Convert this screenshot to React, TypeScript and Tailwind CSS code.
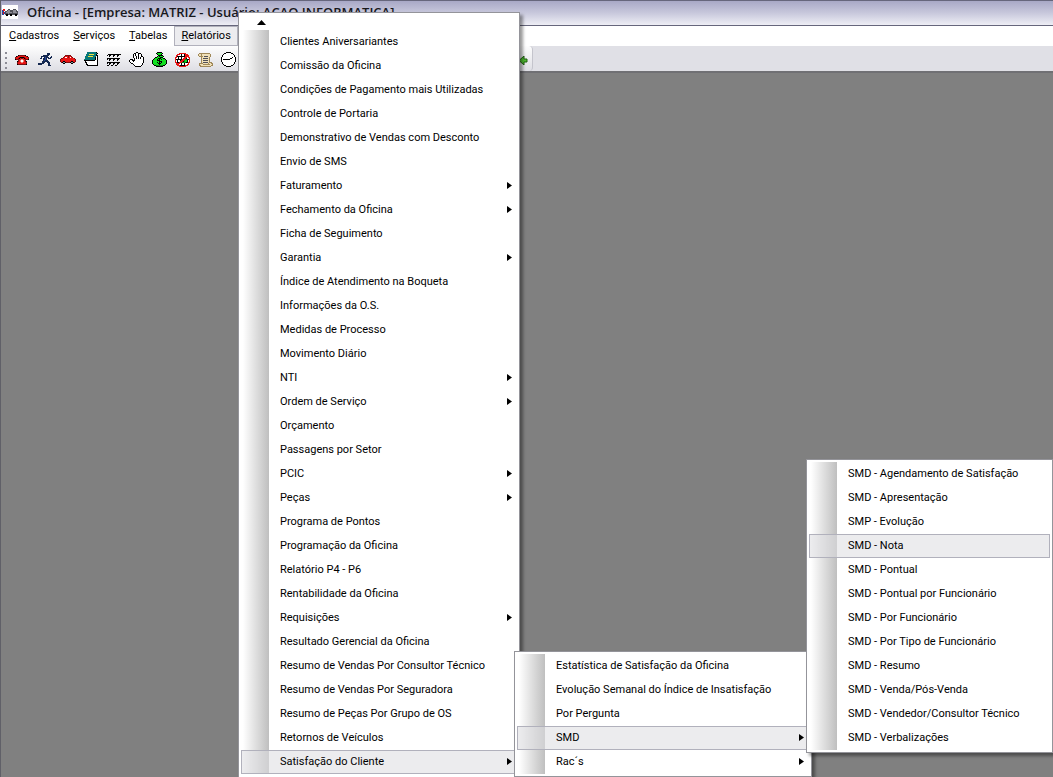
import clsx from 'clsx';

type Item = { label: string; sub?: boolean; active?: boolean };

const REPORTS: Item[] = [
  { label: 'Clientes Aniversariantes' },
  { label: 'Comissão da Oficina' },
  { label: 'Condições de Pagamento mais Utilizadas' },
  { label: 'Controle de Portaria' },
  { label: 'Demonstrativo de Vendas com Desconto' },
  { label: 'Envio de SMS' },
  { label: 'Faturamento', sub: true },
  { label: 'Fechamento da Oficina', sub: true },
  { label: 'Ficha de Seguimento' },
  { label: 'Garantia', sub: true },
  { label: 'Índice de Atendimento na Boqueta' },
  { label: 'Informações da O.S.' },
  { label: 'Medidas de Processo' },
  { label: 'Movimento Diário' },
  { label: 'NTI', sub: true },
  { label: 'Ordem de Serviço', sub: true },
  { label: 'Orçamento' },
  { label: 'Passagens por Setor' },
  { label: 'PCIC', sub: true },
  { label: 'Peças', sub: true },
  { label: 'Programa de Pontos' },
  { label: 'Programação da Oficina' },
  { label: 'Relatório P4 - P6' },
  { label: 'Rentabilidade da Oficina' },
  { label: 'Requisições', sub: true },
  { label: 'Resultado Gerencial da Oficina' },
  { label: 'Resumo de Vendas Por Consultor Técnico' },
  { label: 'Resumo de Vendas Por Seguradora' },
  { label: 'Resumo de Peças Por Grupo de OS' },
  { label: 'Retornos de Veículos' },
  { label: 'Satisfação do Cliente', sub: true, active: true },
];

const SATISFACTION: Item[] = [
  { label: 'Estatística de Satisfação da Oficina' },
  { label: 'Evolução Semanal do Índice de Insatisfação' },
  { label: 'Por Pergunta' },
  { label: 'SMD', sub: true, active: true },
  { label: 'Rac´s', sub: true },
];

const SMD: Item[] = [
  { label: 'SMD - Agendamento de Satisfação' },
  { label: 'SMD - Apresentação' },
  { label: 'SMP - Evolução' },
  { label: 'SMD - Nota', active: true },
  { label: 'SMD - Pontual' },
  { label: 'SMD - Pontual por Funcionário' },
  { label: 'SMD - Por Funcionário' },
  { label: 'SMD - Por Tipo de Funcionário' },
  { label: 'SMD - Resumo' },
  { label: 'SMD - Venda/Pós-Venda' },
  { label: 'SMD - Vendedor/Consultor Técnico' },
  { label: 'SMD - Verbalizações' },
];

const PALETTE: Record<string, string> = {
  k: '#000000',
  w: '#ffffff',
  r: '#e81414',
  d: '#7c1010',
  p: '#f08878',
  n: '#142850',
  b: '#2848a0',
  t: '#087878',
  y: '#f0e040',
  g: '#10e020',
  G: '#0a8a18',
  s: '#f0e0b8',
  o: '#a08858',
  a: '#909098',
  m: '#505058',
};

// 16 pixel sprites, one character per pixel, a dot is transparent
const TOOLS: { name: string; rows: string[] }[] = [
  {
    name: 'Telefone',
    rows: [
      '................',
      '................',
      '................',
      '....kddddddk....',
      '..kdrrrrrrrrdk..',
      '.drrrdkkkkdrrrd.',
      '.drrdkrddrkdrrd.',
      '.kdddrrpprrdddk.',
      '....drpwwprd....',
      '...kdrpwwprdk...',
      '...drrrpprrrd...',
      '...drrrrrrrrd...',
      '...kddddddddk...',
    ],
  },
  {
    name: 'Saída',
    rows: [
      '................',
      '..........nnn...',
      '..........nnn...',
      '......nnnnnn....',
      '....nnnnnnn...n.',
      '....n..nbnnn.nn.',
      '...nn.nnbn.nnn..',
      '......nnbn......',
      '......nbnnn.....',
      '.....nnnnnnn....',
      '.....nnn..nnn...',
      '.nnnnnn....nn...',
      '.nnnn......nn...',
      '...........nnn..',
    ],
  },
  {
    name: 'Veículos',
    rows: [
      '................',
      '................',
      '................',
      '.....dddddd.....',
      '....drrrdrrd....',
      '...drwwrdrwrd...',
      '.ddrrrrrrrrrrrd.',
      'drrrrrrrrrrrrrrd',
      'drrrrrrrrrrrrrrd',
      'drrkkrrrrrrkkrrd',
      '.dkaakddddkaakd.',
      '...kk......kk...',
    ],
  },
  {
    name: 'Agenda',
    rows: [
      '....tttttttttk..',
      '....ttttttttttk.',
      '...tttyyyyyttk..',
      '...ttttttttttkk.',
      '..tttyyyyytttwk.',
      '..ttttttttttkwk.',
      '..ttttttttttkwk.',
      '.tttttttttttkwk.',
      '.kkkkkkkkkkkwwk.',
      '..kwwwwwwwwwwwk.',
      '..kkwwwwwwwwwwk.',
      '...kwwwwwwwwwwk.',
      '...kkwwwwwwwwwk.',
      '....kkkkkkkkkkk.',
    ],
  },
  {
    name: 'Grade',
    rows: [
      '................',
      '................',
      '..kkkkkkkkkkkkk.',
      '.k.kk..kk..kk...',
      '...k...k...k....',
      '................',
      '.kkkkkkkkkkkkk..',
      '.k.kk..kk..kk...',
      '...k...k...k....',
      '................',
      '.kkkkkkkkkkkkk..',
      '.k.kk..kk..kk...',
      '...k...k...k....',
      '.kk..kk..kk.....',
    ],
  },
  {
    name: 'Parar',
    rows: [
      '.......kk.......',
      '.....kkwwkkk....',
      '....kwkwwkwwk...',
      '....kwkwwkwwk...',
      '....kwwkwkwwkk..',
      '....kwwkwkwkwwk.',
      '.....kwkwkwkwwk.',
      '.kkk.kwwwwwwwwk.',
      'kwwkkkwwwwwwwwk.',
      'kwwwkwwwwwwwwwk.',
      '.kwwwwwwwwwwwwk.',
      '..kkwwwwwwwwwk..',
      '....kwwwwwwwwk..',
      '.....kwwwwwwk...',
      '......kkkkkk....',
    ],
  },
  {
    name: 'Financeiro',
    rows: [
      '.....kkkkk......',
      '....kgggggk.....',
      '.....kgggk......',
      '......kkkkk.....',
      '.....kgkgggk....',
      '...kkgggkkk.....',
      '..kgggkkkggkk...',
      '.kgggkgkgkgggk..',
      'kggggkkkggggggk.',
      'kggggggkkkggggk.',
      'kggggkgkgkggggk.',
      'kgggggkkkgggggk.',
      '.kgggggkgggggk..',
      '..kkGGGGGGGkk...',
      '....kkkkkkk.....',
    ],
  },
  {
    name: 'Cancelar',
    rows: [
      '................',
      '....rrrrrrr.....',
      '..rrrwkwwkrrr...',
      '.rrwwwkwwkrrrr..',
      '.rkkkkkkkkrrrr..',
      'rrwkwwkwwrrrwrr.',
      'rwwkwwkwrrrkwwr.',
      'rkkkkkkrrrGGkkr.',
      'rwkwwkrrrGggkwr.',
      'rwkwwrrrkGggkwr.',
      'rrkkrrrGGGGkkrr.',
      '.rrrrwkwwkwwwr..',
      '.rrrwwkwwkwwrr..',
      '..rrrkkkkkrrr...',
      '....rrrrrrr.....',
    ],
  },
  {
    name: 'Histórico',
    rows: [
      '................',
      '.ooooooooooo....',
      'ossosssssssso...',
      'ossosssssssso...',
      '.oooosmmmmsso...',
      '...ossssssso....',
      '...osmmmmmso....',
      '...ossssssso....',
      '...osmmmmmso....',
      '...ossssssso....',
      '...osmmmmmsooo..',
      '.oooosssssossoo.',
      '.osssooooooosso.',
      '.oossssssssssoo.',
      '..ooooooooooo...',
    ],
  },
  {
    name: 'Relógio',
    rows: [
      '.....kkkkk......',
      '...kkwwwwwkk....',
      '..kwwwwwwwwwk...',
      '.kwwwwwwwwwwwk..',
      '.kwwwwwwwwwwwk..',
      'kwwwwwwwwwwkwwk.',
      'kwwwwwwwwkkwwwk.',
      'kwkkkkkkkwwwwwk.',
      'kwwwwwwwwwwwwwk.',
      'kwwwwwwwwwwwwwk.',
      '.kwwwwwwwwwwwk..',
      '.kwwwwwwwwwwwk..',
      '..kwwwwwwwwwk...',
      '...kkwwwwwkk....',
      '.....kkkkk......',
    ],
  },
];

const APP_ICON = [
  'wwwwwwwwwwwwwwww',
  'wwwwwwwwwwwwwwww',
  'wwwwwwwwwwwwwwww',
  'wwwwwwwwwwwwwwww',
  'wrrwwwmmwwwmmmww',
  'brrwwmaammmaaamw',
  'bbwmmaaammmaaamm',
  'brbmaaaaaamaaaam',
  'brbmmmammmmmmmmm',
  'bbwmkkmmkkmmmkkm',
  'wwwwkkwwkkwwwkkw',
  'wwwwwwwwwwwwwwww',
  'wwwwwwwwwwwwwwww',
  'wwwwwwwwwwwwwwww',
];

function Sprite({ rows }: { rows: string[] }) {
  return (
    <svg
      width="16"
      height="16"
      viewBox="0 0 16 16"
      shapeRendering="crispEdges"
      aria-hidden="true"
      className="block shrink-0"
    >
      {rows.flatMap((row, y) =>
        [...row].map((c, x) =>
          c === '.' ? null : (
            <rect key={`${x}-${y}`} x={x} y={y} width="1" height="1" fill={PALETTE[c]} />
          ),
        ),
      )}
    </svg>
  );
}

function Menu({
  items,
  label,
  className,
  scroll = false,
}: {
  items: Item[];
  label: string;
  className: string;
  scroll?: boolean;
}) {
  return (
    <nav
      aria-label={label}
      className={clsx(
        'absolute border border-[#94949a] bg-white px-px py-0.5 shadow-[3px_3px_3px_rgba(0,0,0,0.4)]',
        className,
      )}
    >
      {scroll && (
        <button type="button" aria-label="Rolar para cima" className="block h-[15px] w-full">
          <svg width="9" height="5" viewBox="0 0 9 5" className="ml-[17px]" aria-hidden="true">
            <path d="M4.5 0 9 5H0z" />
          </svg>
        </button>
      )}
      <ul className="bg-linear-to-r from-white from-10% to-[#bfbfbf] bg-size-[29px_100%] bg-no-repeat">
        {items.map((item) => (
          <li key={item.label} className="px-px">
            <button
              type="button"
              className={clsx(
                'flex h-6 w-full items-center justify-between border pr-1 pl-[38px] text-left whitespace-nowrap',
                item.active ? 'border-[#b1b1bc] bg-[#dcdce0]/55' : 'border-transparent',
              )}
            >
              {item.label}
              {item.sub && (
                <svg width="5" height="7" viewBox="0 0 5 7" className="mb-0.5" aria-hidden="true">
                  <path d="M0 0 5 3.5 0 7z" />
                </svg>
              )}
            </button>
          </li>
        ))}
      </ul>
    </nav>
  );
}

export default function App() {
  return (
    <div className="relative flex h-screen flex-col overflow-hidden border-l border-[#606068] bg-[#808080] font-[Roboto,sans-serif] text-[11px] text-black">
      <header className="flex h-[26px] shrink-0 items-center gap-2 border-y border-[#66667c] bg-linear-to-b from-[#a8a8c6] via-[#c8c8dc] to-[#eeeef5] pl-px">
        <Sprite rows={APP_ICON} />
        <h1 className="ml-px font-['Open_Sans',sans-serif] text-[13px] font-semibold whitespace-nowrap text-[#18181c]">
          Oficina - [Empresa: MATRIZ - Usuário: ACAO INFORMATICA]
        </h1>
      </header>

      <nav aria-label="Principal" className="flex h-5 shrink-0 bg-white pl-px">
        {['Cadastros', 'Serviços', 'Tabelas', 'Relatórios'].map((name) => (
          <button
            key={name}
            type="button"
            className={clsx(
              'h-5 border px-1.5',
              name === 'Relatórios' ? 'border-[#b1b1bc] bg-[#ececef]' : 'border-transparent',
            )}
          >
            <span className="underline">{name[0]}</span>
            {name.slice(1)}
          </button>
        ))}
      </nav>

      <div className="flex h-[27px] shrink-0 border-b-2 border-[#707074] bg-[#e0e0e6]">
        <div className="flex w-[532px] items-center justify-between rounded-r-sm border-r border-[#c4c4cc] bg-linear-to-b from-[#fdfdfd] to-[#dedee4] pt-[3px] pr-1 pl-1">
          <div className="flex items-center gap-[7px]">
            <span className="flex w-0.5 flex-col gap-[3px]">
              {[0, 1, 2, 3].map((n) => (
                <i key={n} className="size-[2px] bg-[#8c8c96]" />
              ))}
            </span>
            {TOOLS.map((tool) => (
              <button key={tool.name} type="button" aria-label={tool.name}>
                <Sprite rows={tool.rows} />
              </button>
            ))}
          </div>
          <svg width="9" height="9" viewBox="0 0 9 9" aria-hidden="true">
            <path d="M0 4.5 5 0v3h3v3H5v3z" fill="#50c030" stroke="#206010" />
          </svg>
        </div>
      </div>

      <main className="flex-1" aria-label="Área de trabalho" />

      <Menu
        items={REPORTS}
        label="Relatórios"
        scroll
        className="top-3 -bottom-2 left-[237px] w-[282px]"
      />
      <Menu
        items={SATISFACTION}
        label="Satisfação do Cliente"
        className="top-[651px] left-[513px] w-[298px]"
      />
      <Menu items={SMD} label="SMD" className="top-[459px] left-[805px] w-[247px]" />
    </div>
  );
}
